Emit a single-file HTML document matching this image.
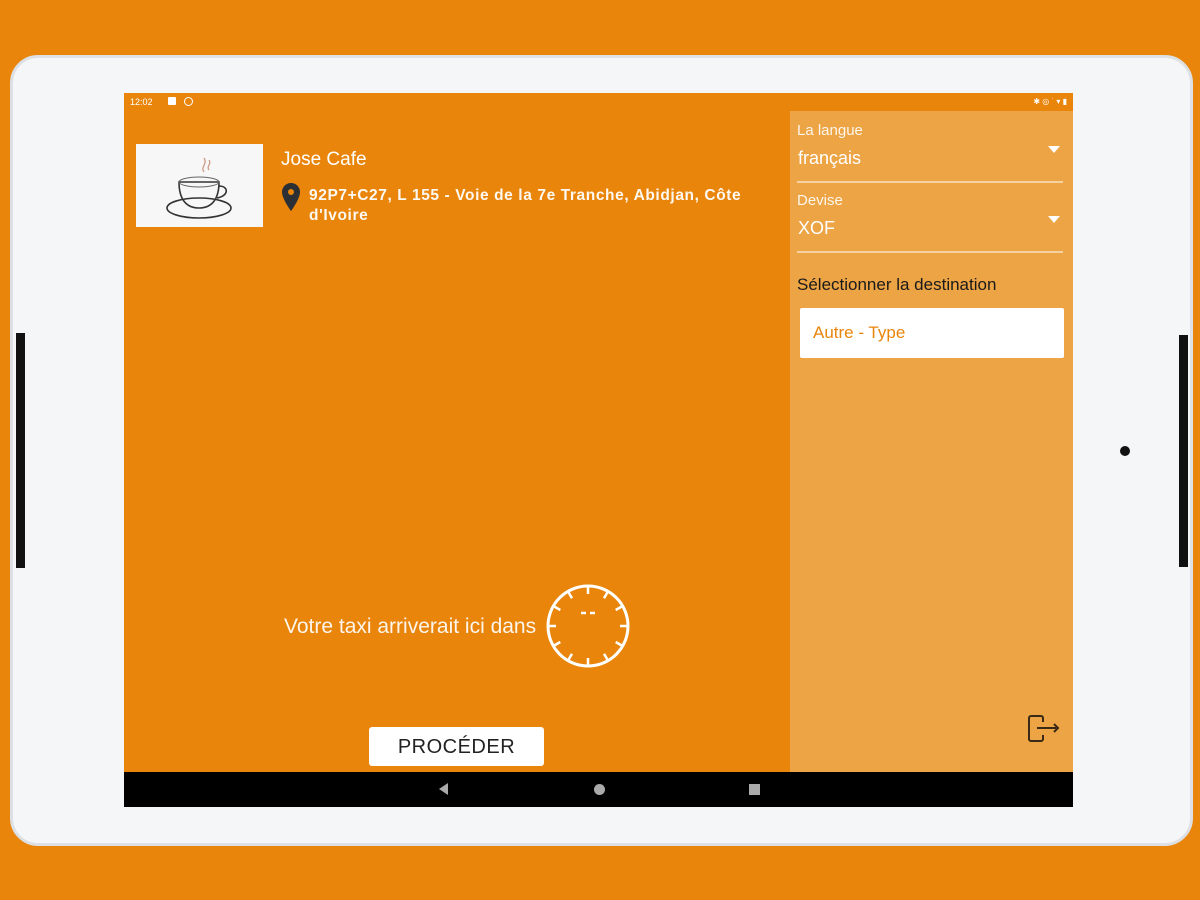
<!DOCTYPE html>
<html><head><meta charset="utf-8"><style>
*{margin:0;padding:0;box-sizing:border-box}
body{width:1200px;height:900px;background:#e8850a;position:relative;overflow:hidden;font-family:"Liberation Sans",Roboto,sans-serif}
.frame{position:absolute;left:10px;top:55px;width:1183px;height:791px;background:#f5f6f8;border:3px solid #dde0e4;border-radius:28px}
.btn{position:absolute;background:#111;width:9px}
.screen{position:absolute;left:124px;top:93px;width:949px;height:714px;background:#e8850a;overflow:hidden}
.status{position:absolute;left:0;top:0;width:100%;height:18px;color:#fff;font-size:9px}
.panel{position:absolute;left:666px;top:18px;width:283px;height:661px;background:#eca444}
.nav{position:absolute;left:0;top:679px;width:949px;height:35px;background:#000}
.w{color:#fff}
</style></head><body>
<div class="frame"></div>
<div class="btn" style="left:16px;top:333px;height:235px"></div>
<div class="btn" style="left:1179px;top:335px;height:232px"></div>
<div style="position:absolute;left:1120px;top:446px;width:10px;height:10px;border-radius:50%;background:#111"></div>
<div class="screen">
 <div class="status"><span style="position:absolute;left:6px;top:4px">12:02</span>
  <span style="position:absolute;left:44px;top:4px;width:8px;height:8px;background:#fff;border-radius:1px"></span>
  <span style="position:absolute;left:60px;top:4px;width:9px;height:9px;border:1.5px solid #fff;border-radius:50%"></span>
  <span style="position:absolute;right:6px;top:4px;font-size:8px">✱ ◎ ˙ ▾ ▮</span></div>
 <div style="position:absolute;left:12px;top:51px;width:127px;height:83px;background:#f7f7f7">
  <svg width="127" height="83" viewBox="0 0 127 83"><path d="M68 28c-4-5 4-8 0-14M73 26c-3-4 3-6 0-10" stroke="#c98" fill="none" stroke-width="1.3"/><ellipse cx="63" cy="64" rx="32" ry="10" fill="none" stroke="#333" stroke-width="1.6"/><path d="M43 38h40c0 17-7 26-20 26s-20-9-20-26z" fill="none" stroke="#333" stroke-width="1.6"/><ellipse cx="63" cy="38" rx="20" ry="5" fill="none" stroke="#666"/><path d="M83 42c10 0 10 10-2 12" fill="none" stroke="#333" stroke-width="1.6"/></svg>
 </div>
 <div class="w" style="position:absolute;left:157px;top:56px;font-size:19px">Jose Cafe</div>
 <svg style="position:absolute;left:157px;top:89px" width="20" height="30" viewBox="0 0 20 30"><path d="M10 1C5 1 1 5 1 10c0 7 9 19 9 19s9-12 9-19c0-5-4-9-9-9z" fill="#2c2f33"/><circle cx="10" cy="10" r="3" fill="#e8850a"/></svg>
 <div class="w" style="position:absolute;left:185px;top:93px;font-size:15.5px;line-height:20px;width:470px;font-weight:bold;letter-spacing:.6px;opacity:.95">92P7+C27, L 155 - Voie de la 7e Tranche, Abidjan, Côte d'Ivoire</div>
 <div class="w" style="position:absolute;left:160px;top:522px;font-size:21px;opacity:.92">Votre taxi arriverait ici dans</div>
 <svg style="position:absolute;left:421px;top:490px" width="86" height="86" viewBox="0 0 86 86"><circle cx="43" cy="43" r="40" fill="none" stroke="#fff" stroke-width="3"/><g stroke="#fff" stroke-width="2.5"><line x1="43" y1="3" x2="43" y2="11"/><line x1="43" y1="75" x2="43" y2="83"/><line x1="3" y1="43" x2="11" y2="43"/><line x1="75" y1="43" x2="83" y2="43"/><line x1="63" y1="8.4" x2="59" y2="15.3"/><line x1="23" y1="8.4" x2="27" y2="15.3"/><line x1="63" y1="77.6" x2="59" y2="70.7"/><line x1="23" y1="77.6" x2="27" y2="70.7"/><line x1="77.6" y1="23" x2="70.7" y2="27"/><line x1="8.4" y1="23" x2="15.3" y2="27"/><line x1="77.6" y1="63" x2="70.7" y2="59"/><line x1="8.4" y1="63" x2="15.3" y2="59"/><line x1="36" y1="30" x2="41" y2="30"/><line x1="45" y1="30" x2="50" y2="30"/></g></svg>
 <div style="position:absolute;left:245px;top:634px;width:175px;height:39px;background:#fff;border-radius:3px;font-size:20px;color:#222;text-align:center;line-height:40px;letter-spacing:.5px">PROCÉDER</div>
 <div class="panel">
  <div class="w" style="position:absolute;left:7px;top:11px;font-size:15px;opacity:.9">La langue</div>
  <div class="w" style="position:absolute;left:8px;top:37px;font-size:18px">français</div>
  <div style="position:absolute;left:258px;top:35px;border:6px solid transparent;border-top:7px solid #fff"></div>
  <div style="position:absolute;left:7px;top:70px;width:266px;height:2px;background:#f6d2a2"></div>
  <div class="w" style="position:absolute;left:7px;top:81px;font-size:15px;opacity:.9">Devise</div>
  <div class="w" style="position:absolute;left:8px;top:107px;font-size:18px">XOF</div>
  <div style="position:absolute;left:258px;top:105px;border:6px solid transparent;border-top:7px solid #fff"></div>
  <div style="position:absolute;left:7px;top:140px;width:266px;height:2px;background:#f6d2a2"></div>
  <div style="position:absolute;left:7px;top:164px;font-size:17px;color:#1a1a1a">Sélectionner la destination</div>
  <div style="position:absolute;left:10px;top:197px;width:264px;height:50px;background:#fff;border-radius:2px;color:#e8850a;font-size:17px;line-height:50px;padding-left:13px">Autre - Type</div>
  <svg style="position:absolute;left:236px;top:603px" width="36" height="30" viewBox="0 0 36 30"><path d="M17 8V4a2 2 0 0 0-2-2H5a2 2 0 0 0-2 2v21a2 2 0 0 0 2 2h10a2 2 0 0 0 2-2v-4M11 14h21M28 10l4 4-4 4" fill="none" stroke="#3a2a15" stroke-width="2"/></svg>
 </div>
 <div class="nav">
  <div style="position:absolute;left:315px;top:11px;border:6px solid transparent;border-right:9px solid #aaa;border-left:0"></div>
  <div style="position:absolute;left:470px;top:12px;width:11px;height:11px;border-radius:50%;background:#aaa"></div>
  <div style="position:absolute;left:625px;top:12px;width:11px;height:11px;background:#aaa"></div>
 </div>
</div>
</body></html>
